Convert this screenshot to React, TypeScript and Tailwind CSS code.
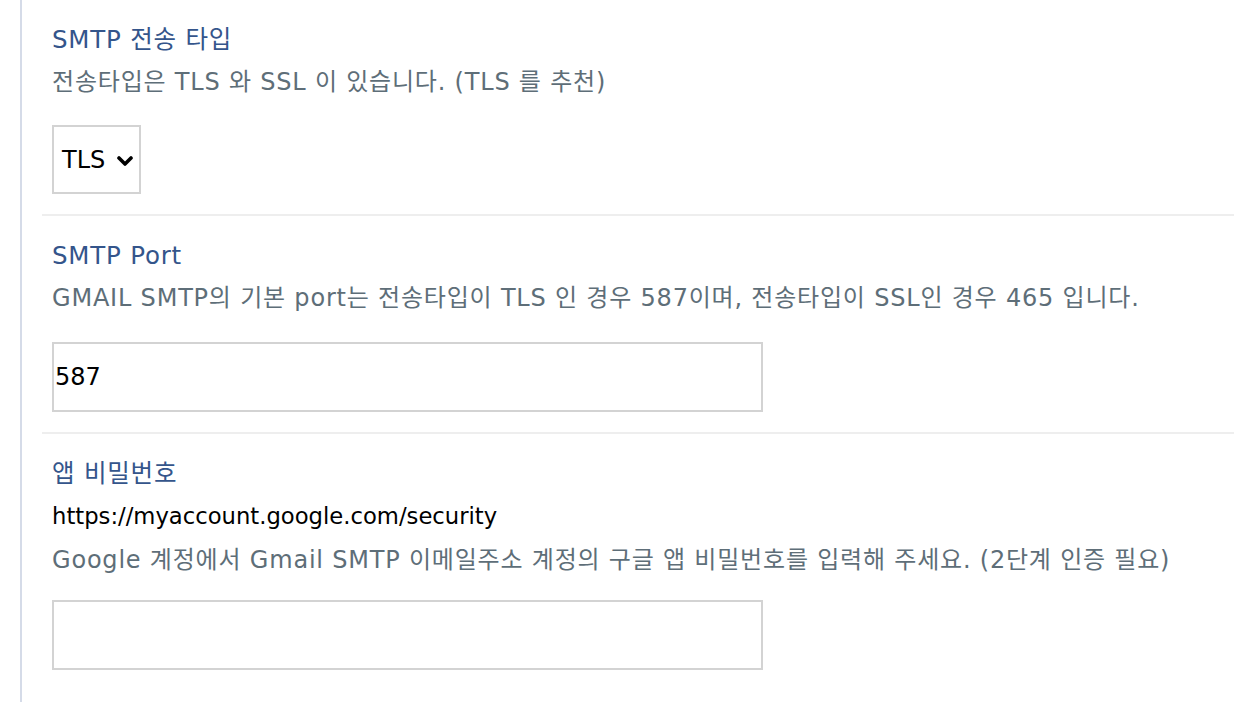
import React from 'react';

const FONT = "font-['DejaVu_Sans','Noto_Sans_CJK_KR',sans-serif]";

interface FieldRowProps {
  title: string;
  children: React.ReactNode;
  last?: boolean;
}

const FieldRow: React.FC<FieldRowProps> = ({ title, children, last }) => {
  return (
    <div className={`pl-[10px] pt-5 pb-5 ${last ? '' : 'border-b-2 border-[#eeeeee]'}`}>
      <div className="text-[24.5px] leading-[40px] tracking-[0.8px] text-[#34558b]">{title}</div>
      {children}
    </div>
  );
};

const Desc: React.FC<{ children: React.ReactNode }> = ({ children }) => (
  <div className="text-[24px] leading-[44px] tracking-[0.8px] text-[#5e6e78] whitespace-nowrap">{children}</div>
);

const App: React.FC = () => {
  return (
    <div className={`min-h-screen bg-white ${FONT}`}>
      <div className="ml-5 min-h-[702px] border-l-2 border-[#d5dbe8] pl-5">
        <FieldRow title="SMTP 전송 타입">
          <Desc>전송타입은 TLS 와 SSL 이 있습니다. (TLS 를 추천)</Desc>
          <div className="mt-[21px] flex h-[69px] w-[89px] items-center gap-[12px] border-2 border-[#d3d3d3] pl-2 text-[24px] text-black">
            <span>TLS</span>
            <svg width="16" height="12" viewBox="0 0 16 12" className="mt-[2px]">
              <polyline points="2,3 8,9 14,3" fill="none" stroke="#000" strokeWidth="3.6" strokeLinecap="round" strokeLinejoin="round" />
            </svg>
          </div>
        </FieldRow>

        <FieldRow title="SMTP Port">
          <Desc>GMAIL SMTP의 기본 port는 전송타입이 TLS 인 경우 587이며, 전송타입이 SSL인 경우 465 입니다.</Desc>
          <div className="mt-[22px] flex h-[70px] w-[711px] items-center border-2 border-[#d3d3d3] pl-[1px]">
            <span className="text-[24px] text-black">587</span>
          </div>
        </FieldRow>

        <FieldRow title="앱 비밀번호" last>
          <div className="text-[22.7px] leading-[44px] text-black">https://myaccount.google.com/security</div>
          <Desc>Google 계정에서 Gmail SMTP 이메일주소 계정의 구글 앱 비밀번호를 입력해 주세요. (2단계 인증 필요)</Desc>
          <div className="mt-[18px] h-[70px] w-[711px] border-2 border-[#d3d3d3]" />
        </FieldRow>
      </div>
    </div>
  );
};

export default App;
